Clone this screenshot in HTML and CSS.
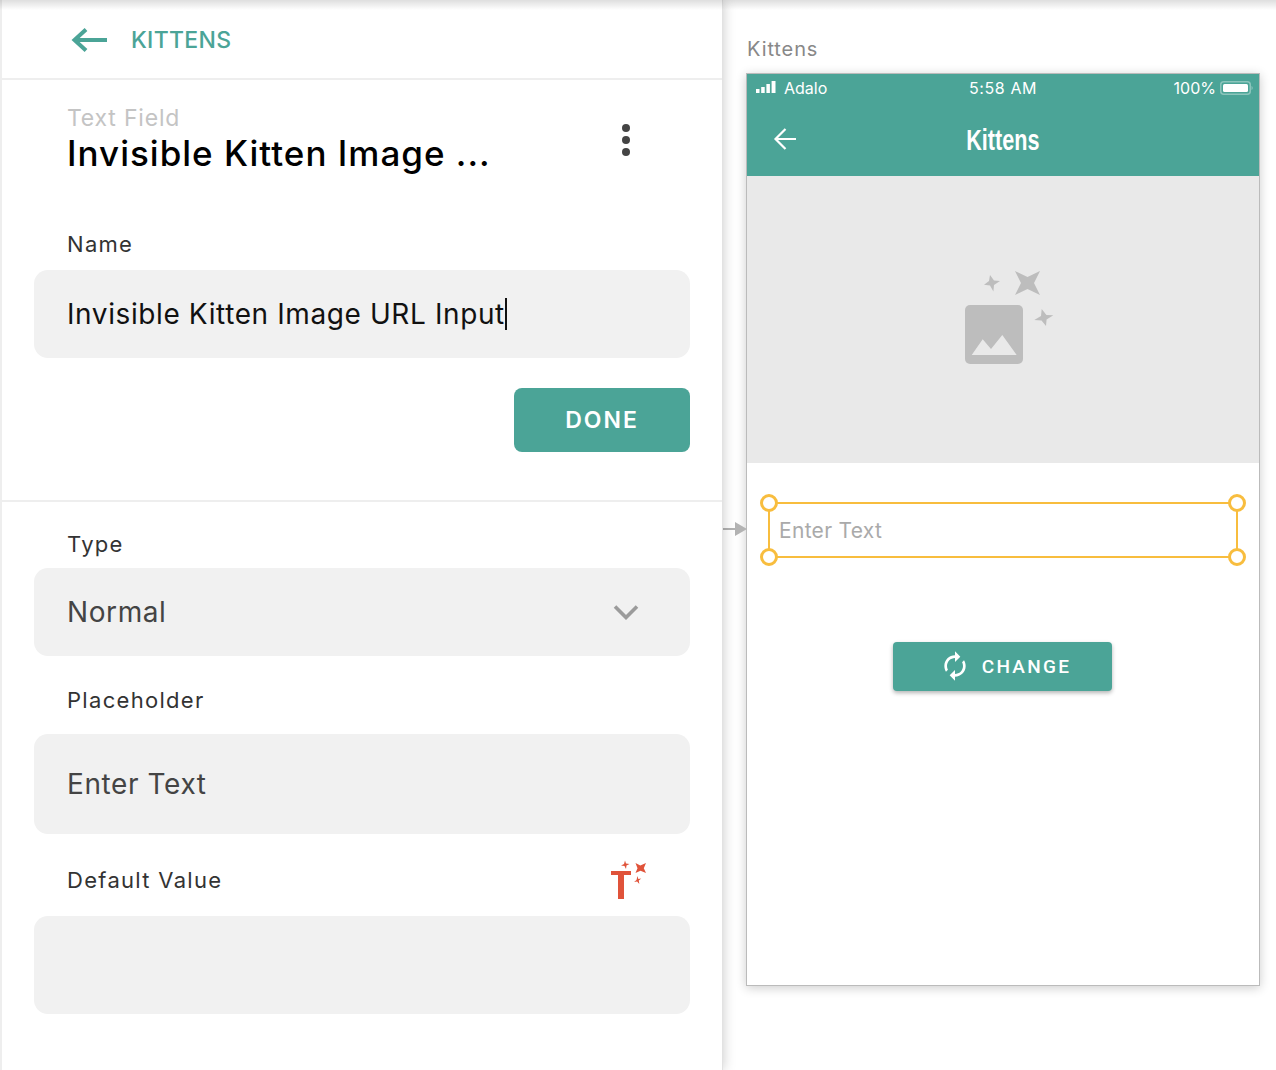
FILE: index.html
```html
<!DOCTYPE html>
<html lang="en">
<head>
  <meta charset="UTF-8" />
  <meta name="viewport" content="width=device-width, initial-scale=1.0" />
  <title>Kittens</title>
  <link rel="stylesheet" href="styles.css">
</head>
<body>
  <div id="app">
    <div class="top-shade"></div>

    <aside id="panel">
      <a class="back-link">
        <svg class="back-arrow" width="38" height="26" viewBox="0 0 38 26"><path d="M36 13H4M15 2.500L3.500 13 15 23.500" fill="none" stroke="#4ba497" stroke-width="4"/></svg>
        <span>KITTENS</span>
      </a>

      <section class="details">
        <div class="title-row">
          <div>
            <div class="kind">Text Field</div>
            <h1>Invisible Kitten Image ...</h1>
          </div>
          <div class="more-dots"><i></i><i></i><i></i></div>
        </div>

        <label class="field-label name-label">Name</label>
        <div class="field name-field">
          <span>Invisible Kitten Image URL Input</span><span class="caret"></span>
        </div>
        <div class="done-row"><button class="done-btn">DONE</button></div>
      </section>

      <section class="settings">
        <label class="field-label type-label">Type</label>
        <div class="field select-field">
          <span>Normal</span>
          <svg width="26" height="16" viewBox="0 0 26 16"><path d="M2 2.500l11 11 11-11" fill="none" stroke="#9b9b9b" stroke-width="3.600"/></svg>
        </div>

        <label class="field-label placeholder-label">Placeholder</label>
        <div class="field tall-field"><span>Enter Text</span></div>

        <div class="label-row">
          <label class="field-label">Default Value</label>
          <svg class="magic-text" width="38" height="40" viewBox="0 0 38 40">
            <path d="M1 11h20v4h-7v24H8V15H1z" fill="#e0533a"/>
            <path d="M15 .5l1 3 3.500.5-3 1.500-.5 3.500-1.500-3-3.500-.5 3-1.500z" fill="#e0533a"/>
            <path d="M25.500 3l4.800 2.600L36 3l-2.200 5.200L36 13l-5.500-2.200L25.500 13l2-4.800z" fill="#e0533a"/>
            <path d="M27.500 16l.800 3 3-.5-2.500 2 .5 3.500-2.200-2.500-3 .5 2.400-2z" fill="#e0533a"/>
          </svg>
        </div>
        <div class="field tall-field default-field"></div>
      </section>
    </aside>

    <main id="canvas">
      <div class="screen-name">Kittens</div>
      <div class="connector"><i></i></div>

      <div id="phone">
        <div class="phone-head">
          <div class="status-bar">
            <div class="status-left">
              <svg width="20" height="12" viewBox="0 0 20 12"><path d="M0 8h3.500v4H0zM5.200 6h3.500v6H5.200zM10.400 3h3.500v9h-3.500zM15.600 0h3.900v12h-3.900z" fill="#fff"/></svg>
              <span>Adalo</span>
            </div>
            <div class="status-time">5:58 AM</div>
            <div class="status-right">
              <span>100%</span>
              <svg width="33" height="14" viewBox="0 0 33 14"><rect x=".75" y=".75" width="29.500" height="12.500" rx="3" fill="none" stroke="#8cc5bc" stroke-width="1.500"/><rect x="3" y="3" width="25" height="8" rx="1.500" fill="#fff"/><path d="M31.500 5v4c.8-.3 1.200-1 1.200-2s-.4-1.700-1.200-2z" fill="#8cc5bc"/></svg>
            </div>
          </div>
          <div class="app-bar">
            <svg class="app-back" width="24" height="24" viewBox="0 0 24 24"><path d="M23 12H2.500M12.500 2 2.500 12l10 10" fill="none" stroke="#fff" stroke-width="2.200"/></svg>
            <div class="app-title">Kittens</div>
          </div>
        </div>

        <div class="image-slot">
          <svg width="90" height="96" viewBox="0 0 90 96">
            <rect x="1" y="37" width="58" height="59" rx="5" fill="#bdbdbd"/>
            <path d="M7.700 87 18.700 71.300 27 81 38.300 67 52.700 87z" fill="#e9e9e9"/>
            <path d="M51 3l12.500 6L76 3l-6 12 6 12-12.500-6L51 27l6-12z" fill="#bdbdbd"/>
            <path d="M26 7l4 5.500 6 .5-6 4-.6 6.400-3.400-5.900-6-.8 5-3.700z" fill="#bdbdbd"/>
            <path d="M77.700 41l4.700 6 6.900.3-6.700 4.200-.6 6.500-4.500-5.500-7.200-.5 6.700-4z" fill="#bdbdbd"/>
          </svg>
        </div>

        <div class="phone-body">
          <div class="text-input">
            <span>Enter Text</span>
            <i class="handle tl"></i><i class="handle tr"></i><i class="handle bl"></i><i class="handle br"></i>
          </div>
          <button class="change-btn">
            <svg width="32" height="32" viewBox="0 0 24 24"><path d="M12 4V1L8 5l4 4V6c3.310 0 6 2.690 6 6 0 1.010-.25 1.970-.7 2.800l1.460 1.460C19.540 15.030 20 13.570 20 12c0-4.420-3.580-8-8-8zm0 14c-3.310 0-6-2.690-6-6 0-1.010.25-1.970.7-2.800L5.240 7.740C4.460 8.970 4 10.430 4 12c0 4.420 3.580 8 8 8v3l4-4-4-4v3z" fill="#fff" transform="matrix(-1 0 0 1 24 0)"/></svg>
            <span>CHANGE</span>
          </button>
        </div>
      </div>
    </main>
  </div>
</body>
</html>
```

FILE: styles.css
```css
body {
  margin: 0;
  font-family: Inter, "Open Sans", sans-serif;
  background-color: #fff;
  color: #111;
}

#app {
  position: relative;
  display: flex;
  width: 1276px;
  height: 1070px;
  overflow: hidden;
}

.top-shade {
  position: absolute;
  top: 0;
  left: 0;
  right: 0;
  height: 10px;
  background: linear-gradient(to bottom, rgba(0,0,0,0.13), rgba(0,0,0,0));
  z-index: 5;
}

#panel {
  width: 723px;
  flex: none;
  box-sizing: border-box;
  border-left: 2px solid #eee;
  background-color: #fff;
  box-shadow: 0 0 12px rgba(0,0,0,0.22);
  border-right: 1px solid #e2e2e2;
  z-index: 2;
}

.back-link {
  display: flex;
  align-items: center;
  box-sizing: border-box;
  height: 78px;
  padding: 2px 0 0 69px;
  color: #4ba497;
  font-size: 23px;
  font-weight: 500;
  letter-spacing: 0.3px;
}

.back-arrow {
  margin-right: 22px;
}

.details {
  height: 420px;
  border-top: 2px solid #eee;
  border-bottom: 2px solid #eee;
}

.title-row {
  display: flex;
  justify-content: space-between;
  padding: 25px 92px 0 65px;
}

.kind {
  font-size: 23px;
  line-height: 26px;
  letter-spacing: 0.8px;
  color: #c4c4c4;
}

h1 {
  margin: 0;
  font-size: 35px;
  line-height: 44px;
  font-weight: 500;
  letter-spacing: 1px;
  color: #000;
}

.more-dots {
  display: flex;
  flex-direction: column;
  gap: 4px;
  padding-top: 19px;
}

.more-dots i {
  width: 8px;
  height: 8px;
  border-radius: 50%;
  background-color: #444;
}

.field-label {
  display: block;
  padding-left: 65px;
  font-size: 22px;
  line-height: 28px;
  letter-spacing: 1.3px;
  color: #333;
}

.name-label {
  margin-top: 55px;
}

.field {
  display: flex;
  align-items: center;
  box-sizing: border-box;
  width: 656px;
  margin-left: 32px;
  padding: 0 33px;
  background-color: #f1f1f1;
  border-radius: 14px;
  font-size: 28px;
  letter-spacing: 0.6px;
  color: #444;
}

.name-field {
  height: 88px;
  margin-top: 12px;
  color: #111;
}

.caret {
  width: 2px;
  height: 32px;
  background-color: #111;
}

.done-row {
  display: flex;
  justify-content: flex-end;
  width: 656px;
  margin: 30px 0 0 32px;
}

.done-btn {
  width: 176px;
  height: 64px;
  border: 0;
  border-radius: 8px;
  background-color: #4ba497;
  color: #fff;
  font-family: inherit;
  font-size: 23px;
  font-weight: 600;
  letter-spacing: 2px;
}

.type-label {
  margin-top: 28px;
}

.select-field {
  justify-content: space-between;
  height: 88px;
  margin-top: 10px;
  padding-right: 51px;
}

.placeholder-label {
  margin-top: 30px;
}

.tall-field {
  height: 100px;
  margin-top: 20px;
}

.label-row {
  display: flex;
  justify-content: space-between;
  align-items: center;
  height: 40px;
  margin-top: 26px;
  padding-right: 74px;
}

.default-field {
  height: 98px;
  margin-top: 16px;
}

#canvas {
  position: relative;
  flex: 1;
  padding: 37px 16px 0 23px;
}

.screen-name {
  padding-left: 1px;
  font-size: 20px;
  line-height: 24px;
  letter-spacing: 0.9px;
  color: #888;
}

.connector {
  position: absolute;
  left: 0;
  top: 528px;
  width: 15px;
  height: 2px;
  background-color: #b3b3b3;
}

.connector i {
  position: absolute;
  left: 12px;
  top: -6px;
  border-left: 12px solid #b3b3b3;
  border-top: 7px solid transparent;
  border-bottom: 7px solid transparent;
}

#phone {
  box-sizing: border-box;
  width: 514px;
  height: 913px;
  margin-top: 12px;
  border: 1px solid #bbb;
  background-color: #fff;
  box-shadow: 0 2px 10px rgba(0,0,0,0.2);
}

.phone-head {
  background-color: #4ba497;
  color: #fff;
}

.status-bar {
  display: grid;
  grid-template-columns: 1fr auto 1fr;
  align-items: center;
  height: 28px;
  padding: 0 6px 0 9px;
  font-size: 16px;
}

.status-time {
  margin-left: -3px;
  letter-spacing: 0.6px;
}

.status-left,
.status-right {
  display: flex;
  align-items: center;
  gap: 8px;
}

.status-left svg {
  margin-bottom: 2px;
}

.status-right {
  justify-content: flex-end;
  gap: 4px;
}

.app-bar {
  display: flex;
  align-items: center;
  justify-content: center;
  position: relative;
  height: 74px;
}

.app-back {
  position: absolute;
  left: 26px;
  top: 25px;
}

.app-title {
  margin-top: 2px;
  font-family: "Liberation Sans", sans-serif;
  font-size: 30px;
  font-weight: 700;
  transform: scaleX(0.72);
}

.image-slot {
  display: flex;
  align-items: flex-start;
  justify-content: center;
  box-sizing: border-box;
  height: 287px;
  padding: 92px 0 0 11px;
  background-color: #e9e9e9;
}

.phone-body {
  display: flex;
  flex-direction: column;
  align-items: center;
}

.text-input {
  position: relative;
  display: flex;
  align-items: center;
  box-sizing: border-box;
  width: 470px;
  height: 56px;
  margin-top: 39px;
  padding: 0 9px;
  border: 2px solid #f8bd3e;
  font-size: 21px;
  letter-spacing: 0.3px;
  color: #aaa;
}

.handle {
  position: absolute;
  box-sizing: border-box;
  width: 18px;
  height: 18px;
  border: 3px solid #f8bd3e;
  border-radius: 50%;
  background-color: #fff;
}

.tl { left: -10px; top: -10px; }
.tr { right: -10px; top: -10px; }
.bl { left: -10px; bottom: -10px; }
.br { right: -10px; bottom: -10px; }

.change-btn {
  display: flex;
  align-items: center;
  justify-content: center;
  gap: 11px;
  width: 219px;
  height: 49px;
  margin: 84px 1px 0 0;
  padding: 0 0 1px 5px;
  border: 0;
  border-radius: 4px;
  background-color: #4ba497;
  box-shadow: 0 2px 4px rgba(0,0,0,0.3);
  color: #fff;
  font-family: Roboto, sans-serif;
  font-size: 19px;
  font-weight: 500;
  letter-spacing: 2.3px;
}
```
